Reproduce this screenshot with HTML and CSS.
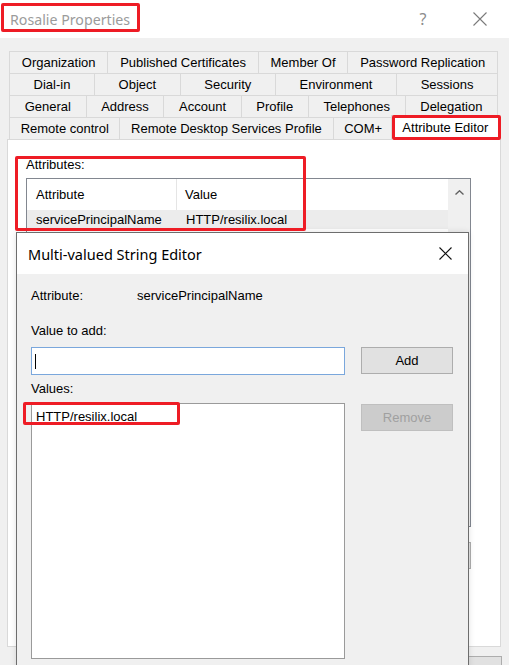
FILE: index.html
```html
<!DOCTYPE html>
<html lang="en">
<head>
<meta charset="utf-8">
<title>Rosalie Properties</title>
<link rel="stylesheet" href="styles.css">
</head>
<body>
<div class="window">
  <header class="titlebar">
    <span class="title">Rosalie Properties</span>
    <span class="help">?</span>
    <span class="close-wrap">
      <svg class="close" viewBox="0 0 14 14" width="14" height="14"><path d="M0.5 0.5L13.5 13.5M13.5 0.5L0.5 13.5"/></svg>
    </span>
  </header>
  <div class="client">
    <div class="tabs">
      <div class="tabrow">
        <span class="tab">Organization</span>
        <span class="tab">Published Certificates</span>
        <span class="tab">Member Of</span>
        <span class="tab">Password Replication</span>
      </div>
      <div class="tabrow">
        <span class="tab">Dial-in</span>
        <span class="tab">Object</span>
        <span class="tab">Security</span>
        <span class="tab">Environment</span>
        <span class="tab">Sessions</span>
      </div>
      <div class="tabrow">
        <span class="tab">General</span>
        <span class="tab">Address</span>
        <span class="tab">Account</span>
        <span class="tab">Profile</span>
        <span class="tab">Telephones</span>
        <span class="tab">Delegation</span>
      </div>
      <div class="tabrow">
        <span class="tab">Remote control</span>
        <span class="tab">Remote Desktop Services Profile</span>
        <span class="tab">COM+</span>
        <span class="tab selected">Attribute Editor</span>
      </div>
    </div>
    <div class="panel">
      <div class="panel-label">Attributes:</div>
      <div class="listview">
        <div class="lv-main">
          <div class="lv-header"><span class="col1">Attribute</span><span class="col2">Value</span></div>
          <div class="lv-row selected"><span class="col1">servicePrincipalName</span><span class="col2">HTTP/resilix.local</span></div>
        </div>
        <div class="scrollbar">
          <svg class="arrow-up" viewBox="0 0 9 5" width="9" height="5"><path d="M0.5 4.5L4.5 0.8L8.5 4.5"/></svg>
        </div>
      </div>
      <div class="panel-actions">
        <button class="btn" aria-label="Edit"></button>
      </div>
    </div>
    <div class="footer">
      <button class="btn" aria-label="OK"></button>
      <button class="btn" aria-label="Cancel"></button>
      <button class="btn" aria-label="Apply"></button>
      <button class="btn" aria-label="Help"></button>
    </div>
  </div>
</div>

<div class="dialog">
  <div class="dlg-title">
    <span class="dlg-caption">Multi-valued String Editor</span>
    <span class="dlg-close">
      <svg viewBox="0 0 13 13" width="13" height="13"><path d="M0.5 0.5L12.5 12.5M12.5 0.5L0.5 12.5"/></svg>
    </span>
  </div>
  <div class="dlg-body">
    <div class="dlg-attr"><span class="dlg-attr-label">Attribute:</span><span>servicePrincipalName</span></div>
    <div class="dlg-label first">Value to add:</div>
    <div class="textbox"><span class="caret"></span></div>
    <button class="btn dlg-btn">Add</button>
    <div class="dlg-label">Values:</div>
    <div class="values-list"><div class="value-item">HTTP/resilix.local</div></div>
    <button class="btn dlg-btn disabled">Remove</button>
  </div>
</div>

<div class="mark mark-title"></div>
<div class="mark mark-tab"></div>
<div class="mark mark-attrs"></div>
<div class="mark mark-value"></div>
</body>
</html>
```

FILE: styles.css
```css
* { box-sizing: border-box; margin: 0; padding: 0; }

html, body { width: 509px; height: 665px; overflow: hidden; }

body {
  position: relative;
  background: #f0f0f0;
  font-family: "Liberation Sans", Arial, sans-serif;
  font-size: 13px;
  color: #000;
}

/* ---------- outer window ---------- */
.titlebar {
  height: 38px;
  background: #fff;
  display: flex;
  align-items: center;
  padding: 0 6px 0 10px;
}
.title {
  flex: 1;
  font-family: "Noto Sans", "Open Sans", sans-serif;
  font-size: 14.2px;
  color: #9b9b9b;
}
.help {
  width: 30px;
  margin-right: 19px;
  text-align: center;
  font-family: "Noto Sans", sans-serif;
  font-size: 16px;
  color: #8c8c8c;
}
.close-wrap {
  width: 46px;
  display: flex;
  justify-content: center;
}
.close path { stroke: #7a7a7a; stroke-width: 1.1; fill: none; }

.client { padding: 13px 8px 0 7px; }

.tabs { margin: 0 3px 0 2px; }
.tabrow { display: flex; height: 22px; }
.tab {
  flex: 1 1 auto;
  text-align: center;
  line-height: 21px;
  white-space: nowrap;
  border-top: 1px solid #d9d9d9;
  border-left: 1px solid #d9d9d9;
  background: #f0f0f0;
}
.tab:last-child { border-right: 1px solid #d9d9d9; }
.tab.selected {
  position: relative;
  z-index: 1;
  background: #fff;
  margin: -2px -2px -1px -2px;
  line-height: 23px;
  border-right: 1px solid #d9d9d9;
}

.panel {
  height: 508px;
  background: #fff;
  border: 1px solid #d9d9d9;
  padding: 17px 29px 0 18px;
}
.panel-label { line-height: 15px; margin-bottom: 6px; }

.listview {
  width: 445px;
  height: 349px;
  border: 1px solid #828790;
  display: flex;
  background: #fff;
}
.lv-main { flex: 1; }
.lv-header { display: flex; height: 31px; line-height: 31px; }
.lv-header .col1 { width: 150px; padding-left: 9px; border-right: 1px solid #e5e5e5; }
.lv-header .col2 { padding-left: 8px; }
.lv-row { display: flex; height: 19px; line-height: 19px; }
.lv-row.selected { background: #ececec; }
.lv-row .col1 { width: 150px; padding-left: 9px; }
.lv-row .col2 { padding-left: 9px; }

.scrollbar {
  width: 22px;
  background: #f0f0f0;
  display: flex;
  justify-content: center;
  padding-top: 11px;
}
.arrow-up path { stroke: #606060; stroke-width: 1.4; fill: none; }

.panel-actions { width: 445px; display: flex; justify-content: flex-end; margin-top: 15px; }

.btn {
  font-family: "Liberation Sans", Arial, sans-serif;
  font-size: 13px;
  color: #000;
  background: #e1e1e1;
  border: 1px solid #adadad;
  width: 75px;
  height: 27px;
}

.footer { display: flex; justify-content: flex-end; gap: 6px; margin-top: 9px; margin-right: -1px; }
.footer .btn { height: 23px; }

/* ---------- dialog ---------- */
.dialog {
  position: absolute;
  left: 16px;
  top: 232px;
  width: 453px;
  height: 445px;
  background: #f0f0f0;
  border: 1px solid #6d6d6d;
  box-shadow: 0 0 6px rgba(0, 0, 0, 0.12);
}
.dlg-title {
  height: 41px;
  background: #fff;
  display: flex;
  align-items: center;
  padding-left: 11px;
}
.dlg-caption {
  flex: 1;
  font-family: "Noto Sans", "Open Sans", sans-serif;
  font-size: 14.5px;
  color: #000;
}
.dlg-close { width: 46px; display: flex; justify-content: center; }
.dlg-close path { stroke: #111; stroke-width: 1.1; fill: none; }

.dlg-body {
  padding: 14px 0 0 14px;
  display: grid;
  grid-template-columns: 314px 92px;
  column-gap: 16px;
  align-items: start;
}
.dlg-attr { grid-column: 1 / -1; display: flex; line-height: 15px; }
.dlg-attr-label { width: 106px; }
.dlg-label { grid-column: 1 / -1; line-height: 15px; margin-top: 6px; margin-bottom: 7px; }
.dlg-label.first { margin-top: 20px; margin-bottom: 9px; }

.textbox {
  height: 28px;
  background: #fff;
  border: 1px solid #7aa7dc;
  display: flex;
  align-items: center;
  padding-left: 3px;
}
.caret { width: 1px; height: 15px; background: #000; }

.dlg-btn { width: 92px; }
.dlg-btn.disabled { background: #cccccc; border-color: #bfbfbf; color: #a0a0a0; margin-top: 1px; }

.values-list {
  height: 256px;
  background: #fff;
  border: 1px solid #9a9a9a;
  padding: 5px 0 0 4px;
}
.value-item { line-height: 15px; }

/* ---------- annotations ---------- */
.mark {
  position: absolute;
  border: 3px solid #ee1c25;
  border-radius: 2px;
  z-index: 5;
}
.mark-title { left: 1px; top: 3px; width: 139px; height: 29px; }
.mark-tab { left: 392px; top: 115px; width: 109px; height: 25px; }
.mark-attrs { left: 15px; top: 156px; width: 291px; height: 75px; }
.mark-value { left: 23px; top: 402px; width: 157px; height: 23px; }
```
